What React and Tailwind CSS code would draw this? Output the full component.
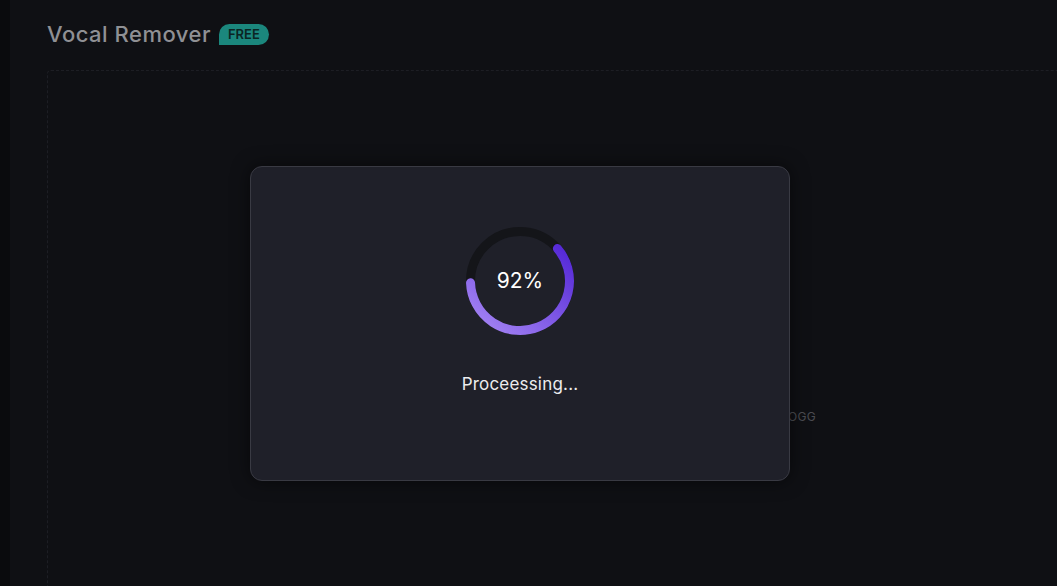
import React from 'react';

// ring geometry for the processing spinner
const R = 49.5;
const CX = 55;
const CY = 55;

const polar = (deg) => {
  const a = ((deg - 90) * Math.PI) / 180;
  return [CX + R * Math.cos(a), CY + R * Math.sin(a)];
};

const arcPath = (from, to) => {
  const [x1, y1] = polar(from);
  const [x2, y2] = polar(to);
  const large = to - from > 180 ? 1 : 0;
  return `M ${x1} ${y1} A ${R} ${R} 0 ${large} 1 ${x2} ${y2}`;
};

const ProgressRing = ({ value }) => (
  <div className="relative w-[110px] h-[110px]">
    <svg width="110" height="110" viewBox="0 0 110 110">
      <defs>
        <linearGradient id="ringGrad" x1="1" y1="0" x2="0" y2="1">
          <stop offset="0%" stopColor="#5326d6" />
          <stop offset="100%" stopColor="#a98af5" />
        </linearGradient>
      </defs>
      <circle cx={CX} cy={CY} r={R} fill="none" stroke="#141519" strokeWidth="9" />
      <path d={arcPath(49, 268)} fill="none" stroke="url(#ringGrad)" strokeWidth="9" strokeLinecap="round" />
    </svg>
    <div className="absolute inset-0 flex items-center justify-center text-[21px] text-white">
      {value}%
    </div>
  </div>
);

const App = () => {
  return (
    <div
      className="relative w-[1057px] h-[586px] flex bg-[#0f1014] overflow-hidden"
      style={{ fontFamily: 'Inter, "Noto Sans", sans-serif' }}
    >
      <div className="w-[10px] shrink-0 bg-[#0a0b0d]" />

      <main className="flex-1 flex flex-col pl-[37px] pt-[20px]">
        <div className="flex items-center gap-[8px] h-[28px]">
          <h1 className="text-[22px] font-medium text-[#8f9094] tracking-[0.5px]">Vocal Remover</h1>
          <span className="h-[21px] px-[9px] flex items-center rounded-full rounded-bl-[3px] bg-[#1b877d] text-[#0b2523] text-[13px] font-semibold leading-none">
            FREE
          </span>
        </div>

        <div className="mt-[22px] flex-1 -mr-[20px] -mb-[20px] border border-dashed border-[#1d1e24] rounded-[4px]">
          <div className="pt-[337px] pl-[514px] whitespace-nowrap text-[12px] text-[#4b4c52] tracking-[0.3px]">
            Supported formats: MP3, WAV, FLAC, OGG
          </div>
        </div>
      </main>

      {/* processing dialog */}
      <div className="absolute left-[250px] top-[166px] w-[540px] h-[315px] rounded-[12px] bg-[#1f2029] border border-[#393a43] shadow-[0_0_18px_rgba(0,0,0,0.55)] flex flex-col items-center pt-[59px]">
        <ProgressRing value={92} />
        <div className="mt-[36px] text-[17px] text-[#ececee] tracking-[0.2px]">Proceessing...</div>
      </div>
    </div>
  );
};

export default App;
